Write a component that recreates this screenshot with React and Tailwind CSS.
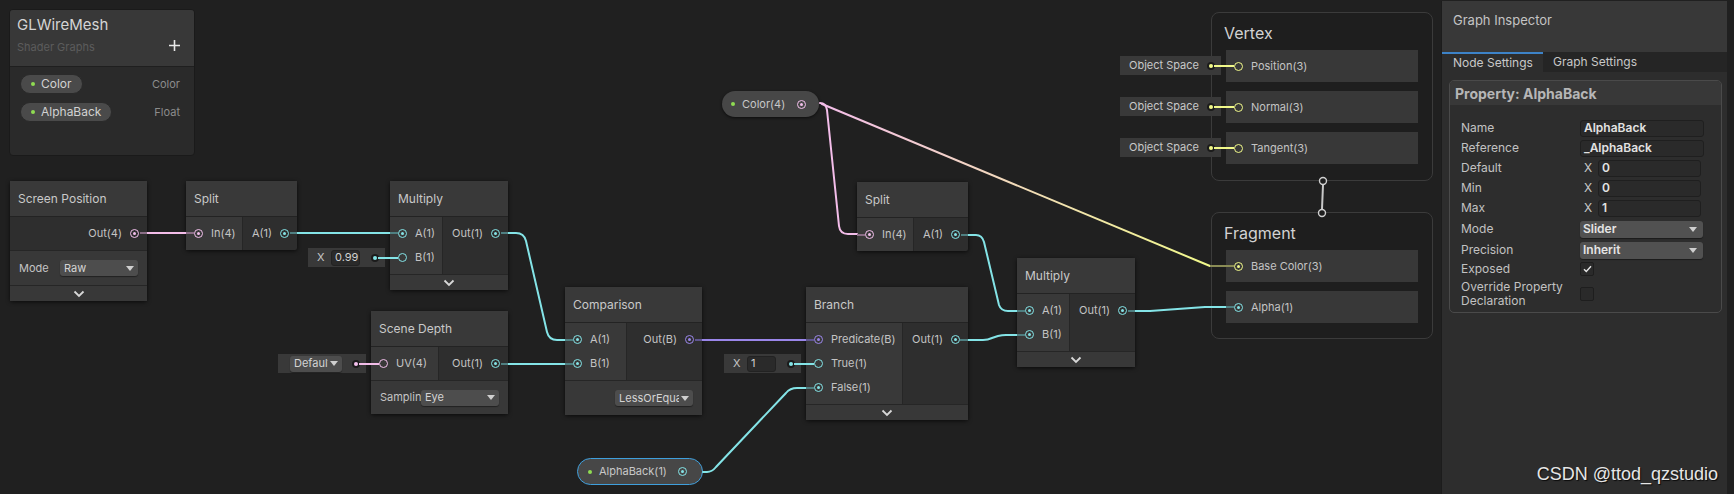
import React from 'react';

// port colours per slot type
const C = {
  f: { b: 'border-[#84e4e7]', d: 'bg-[#84e4e7]' },
  v4: { b: 'border-[#f3c0ec]', d: 'bg-[#f3c0ec]' },
  b: { b: 'border-[#9a86ea]', d: 'bg-[#9a86ea]' },
  v3: { b: 'border-[#f1f98a]', d: 'bg-[#f1f98a]' },
};

function Port({ t, on }) {
  return (
    <span className={`flex h-[9px] w-[9px] shrink-0 items-center justify-center rounded-full border-[1.5px] ${C[t].b}`}>
      {on && <span className={`h-[3px] w-[3px] rounded-full ${C[t].d}`} />}
    </span>
  );
}

function In({ t, on, label }) {
  return (
    <div className="flex h-[24px] items-center gap-[8px] pl-[8px] whitespace-nowrap">
      <Port t={t} on={on} />
      <span>{label}</span>
    </div>
  );
}

function Out({ t, label }) {
  return (
    <div className="flex h-[24px] items-center justify-end gap-[8px] pr-[8px] whitespace-nowrap">
      <span>{label}</span>
      <Port t={t} on />
    </div>
  );
}

function Chevron() {
  return (
    <svg width="12" height="8" viewBox="0 0 12 8">
      <path d="M1.5 1.5 6 6l4.5-4.5" fill="none" stroke="#d8d8d8" strokeWidth="1.8" />
    </svg>
  );
}

function Tri() {
  return (
    <svg width="8" height="5" viewBox="0 0 8 5" className="shrink-0">
      <path d="M0 0h8L4 5z" fill="#cfcfcf" />
    </svg>
  );
}

function Drop({ label, w }) {
  return (
    <div className={`flex h-[16px] items-center gap-[2px] rounded-[3px] bg-[#4d4d4d] pl-[4px] pr-[4px] text-[11px] text-[#d4d4d4] shadow-[0_1px_1px_rgba(0,0,0,0.4)] ${w}`}>
      <span className="flex-1 overflow-hidden whitespace-nowrap">{label}</span>
      <Tri />
    </div>
  );
}

function Node({ pos, title, inW, ins = [], outs = [], children, chevron }) {
  return (
    <div className={`absolute flex flex-col rounded-[2px] bg-[#2e2e2e] text-[11px] text-[#c4c4c4] shadow-[0_1px_4px_rgba(0,0,0,0.7)] ${pos}`}>
      <div className="flex h-[36px] items-center border-b border-[#232323] bg-[#393939] pl-[8px] text-[12px] text-[#c9c9c9]">
        {title}
      </div>
      <div className="flex">
        {ins.length > 0 && (
          <div className={`flex flex-col border-r border-[#262626] bg-[#393939] pt-[4px] pb-[5px] ${inW}`}>
            {ins.map((p) => (
              <In key={p.label} {...p} />
            ))}
          </div>
        )}
        <div className="flex flex-1 flex-col pt-[4px] pb-[5px]">
          {outs.map((p) => (
            <Out key={p.label} {...p} />
          ))}
        </div>
      </div>
      {children}
      {chevron && (
        <div className="flex h-[16px] items-center justify-center border-t border-[#262626] bg-[#383838]">
          <Chevron />
        </div>
      )}
    </div>
  );
}

// little dot where an inline default value plugs into a port
function Dot({ t }) {
  return (
    <span className="flex h-[8px] w-[8px] shrink-0 items-center justify-center rounded-full bg-[#1b1b1b]">
      <span className={`h-[4px] w-[4px] rounded-full ${C[t].d}`} />
    </span>
  );
}

function XField({ pos, value }) {
  return (
    <div className={`absolute flex h-[19px] items-center bg-[#393939] pl-[9px] pr-[6px] text-[11px] text-[#c8c8c8] ${pos}`}>
      <span className="w-[7px]">X</span>
      <span className="ml-[7px] flex h-[16px] w-[29px] items-center rounded-[3px] border border-[#222] bg-[#2a2a2a] pl-[3px] text-[#d0d0d0]">
        {value}
      </span>
      <span className="ml-auto">
        <Dot t="f" />
      </span>
    </div>
  );
}

function SpaceField({ pos }) {
  return (
    <div className={`absolute flex h-[19px] w-[101px] items-center bg-[#393939] pl-[9px] pr-[6px] text-[11px] text-[#c8c8c8] ${pos}`}>
      <span>Object Space</span>
      <span className="ml-auto">
        <Dot t="v3" />
      </span>
    </div>
  );
}

function Slot({ label, on }) {
  return (
    <div className="flex h-[32px] items-center gap-[8px] bg-[#383838] pl-[8px] text-[11px] text-[#c4c4c4]">
      <Port t={label === 'Alpha(1)' ? 'f' : 'v3'} on={on} />
      <span>{label}</span>
    </div>
  );
}

function Context({ pos, title, children }) {
  return (
    <div className={`absolute flex flex-col rounded-[8px] border border-[#3b3b3b] bg-[#1e1e1e] ${pos}`}>
      <div className="flex h-[37px] items-center pl-[12px] pt-[2px] text-[16px] text-[#d2d2d2]">{title}</div>
      <div className="flex flex-col gap-[9px] px-[14px]">{children}</div>
    </div>
  );
}

function Pill({ label, type }) {
  return (
    <div className="flex h-[22px] items-center">
      <div className="flex h-[20px] items-center gap-[6px] rounded-full border border-[#2a2a2a] bg-[#4a4a4a] pl-[10px] pr-[10px] text-[12px] text-[#d2d2d2]">
        <span className="h-[4px] w-[4px] rounded-full bg-[#8fdc52]" />
        <span>{label}</span>
      </div>
      <span className="ml-auto text-[11px] text-[#8c8c8c]">{type}</span>
    </div>
  );
}

function Row({ label, h, children }) {
  return (
    <div className={`flex items-center ${h}`}>
      <span className="w-[119px] text-[12px] leading-[14px] text-[#c2c2c2]">{label}</span>
      {children}
    </div>
  );
}

function TextBox({ value }) {
  return (
    <div className="flex h-[17px] w-[124px] items-center rounded-[3px] border border-[#1f1f1f] bg-[#2a2a2a] pl-[3px] text-[12px] font-semibold text-[#e2e2e2]">
      {value}
    </div>
  );
}

function NumBox({ value }) {
  return (
    <div className="flex items-center">
      <span className="w-[18px] pl-[4px] text-[12px] text-[#c8c8c8]">X</span>
      <div className="flex h-[17px] w-[103px] items-center rounded-[3px] border border-[#1f1f1f] bg-[#2a2a2a] pl-[3px] text-[12px] font-semibold text-[#e2e2e2]">
        {value}
      </div>
    </div>
  );
}

function Select({ value }) {
  return (
    <div className="flex h-[17px] w-[123px] items-center rounded-[3px] bg-[#515151] pl-[3px] pr-[6px] text-[12px] font-semibold text-[#e4e4e4] shadow-[0_1px_1px_rgba(0,0,0,0.4)]">
      <span className="flex-1">{value}</span>
      <Tri />
    </div>
  );
}

function Check({ on }) {
  return (
    <div className="flex h-[14px] w-[14px] items-center justify-center rounded-[2px] border border-[#1e1e1e] bg-[#2a2a2a]">
      {on && (
        <svg width="9" height="8" viewBox="0 0 9 8">
          <path d="M1 4.2 3.3 6.5 8 1.2" fill="none" stroke="#e6e6e6" strokeWidth="1.4" />
        </svg>
      )}
    </div>
  );
}

function Wires() {
  const cyan = '#84e4e7';
  const pink = '#f3bde9';
  const stub = (x1, y1, x2, y2, c) => <line x1={x1} y1={y1} x2={x2} y2={y2} stroke={c} strokeWidth="2" />;
  return (
    <svg className="pointer-events-none absolute left-0 top-0" width="1734" height="494">
      <defs>
        <linearGradient id="py" gradientUnits="userSpaceOnUse" x1="820" y1="103" x2="1210" y2="266">
          <stop offset="0" stopColor="#f3bde9" />
          <stop offset="1" stopColor="#f1f98a" />
        </linearGradient>
      </defs>
      <g fill="none" strokeWidth="2" strokeLinecap="round">
        <path d="M147 233 L186 233" stroke={pink} />
        <path d="M297 233 L390 233" stroke={cyan} />
        <path d="M508 233 L516 233 Q524 233 526 241 L547 332 Q549 340 557 340 L565 340" stroke={cyan} />
        <path d="M508 364 L565 364" stroke={cyan} />
        <path d="M702 340 L806 340" stroke="#9a86ea" />
        <path d="M703 472 L707 472 Q712 472 716 467 L786 393 Q790 388 797 388 L806 388" stroke={cyan} />
        <path d="M820 103 Q826 103 827 110 L839 226 Q840 234 848 234 L857 234" stroke={pink} />
        <path d="M822 104 L1210 266" stroke="url(#py)" />
        <path d="M968 235 L976 235 Q982 235 984 242 L999 305 Q1001 311 1008 311 L1017 311" stroke={cyan} />
        <path d="M968 340 L983 340 Q988 340 992 338 L998 336 Q1002 335 1006 335 L1017 335" stroke={cyan} />
        <path d="M1135 311 L1150 311 L1205 307 L1226 307" stroke={cyan} />
        <path d="M1323 185 L1322 209" stroke="#c8c8c8" />
      </g>
      {/* darker stubs inside the nodes */}
      {stub(140, 233, 147, 233, '#8a6d86')}
      {stub(186, 233, 194, 233, '#8a6d86')}
      {stub(290, 233, 297, 233, '#4f7f81')}
      {stub(390, 233, 398, 233, '#4f7f81')}
      {stub(378, 258, 398, 258, cyan)}
      {stub(501, 233, 508, 233, '#4f7f81')}
      {stub(501, 364, 508, 364, '#4f7f81')}
      {stub(565, 340, 573, 340, '#4f7f81')}
      {stub(565, 364, 573, 364, '#4f7f81')}
      {stub(359, 364, 379, 364, pink)}
      {stub(695, 340, 702, 340, '#5f5590')}
      {stub(806, 340, 814, 340, '#5f5590')}
      {stub(794, 364, 814, 364, cyan)}
      {stub(806, 388, 814, 388, '#4f7f81')}
      {stub(857, 235, 865, 235, '#8a6d86')}
      {stub(961, 235, 968, 235, '#4f7f81')}
      {stub(960, 340, 968, 340, '#4f7f81')}
      {stub(1017, 311, 1025, 311, '#4f7f81')}
      {stub(1017, 335, 1025, 335, '#4f7f81')}
      {stub(1128, 311, 1135, 311, '#4f7f81')}
      {stub(1210, 266, 1234, 266, '#8a8c55')}
      {stub(1226, 307, 1234, 307, '#4f7f81')}
      {stub(1214, 66, 1234, 66, '#f1f98a')}
      {stub(1214, 107, 1234, 107, '#f1f98a')}
      {stub(1214, 148, 1234, 148, '#f1f98a')}
      <circle cx="1323" cy="181" r="3.5" fill="#1e1e1e" stroke="#d0d0d0" strokeWidth="1.4" />
      <circle cx="1322" cy="213" r="3.5" fill="#1e1e1e" stroke="#d0d0d0" strokeWidth="1.4" />
    </svg>
  );
}

export default function App() {
  return (
    <div className="relative h-[494px] w-[1734px] overflow-hidden bg-[#202020] font-['Inter','Noto_Sans',sans-serif]">
      {/* Blackboard */}
      <div className="absolute left-[9px] top-[9px] flex h-[147px] w-[186px] flex-col overflow-hidden rounded-[4px] border border-[#1a1a1a] bg-[#2a2a2a]">
        <div className="flex h-[57px] flex-col border-b border-[#1f1f1f] bg-[#383838] pl-[7px] pr-[14px] pt-[4px]">
          <span className="text-[15px] text-[#d4d4d4]">GLWireMesh</span>
          <div className="mt-[2px] flex items-center justify-between">
            <span className="text-[11px] text-[#5c5c5c]">Shader Graphs</span>
            <svg width="11" height="11" viewBox="0 0 11 11" className="-mt-[3px]">
              <path d="M5.5 0v11M0 5.5h11" stroke="#e8e8e8" strokeWidth="1.6" />
            </svg>
          </div>
        </div>
        <div className="flex flex-col gap-[6px] pl-[10px] pr-[14px] pt-[6px]">
          <Pill label="Color" type="Color" />
          <Pill label="AlphaBack" type="Float" />
        </div>
      </div>

      {/* Graph nodes */}
      <Node pos="left-[10px] top-[181px] w-[137px]" title="Screen Position" outs={[{ t: 'v4', label: 'Out(4)' }]} chevron>
        <div className="flex h-[35px] items-center border-t border-[#262626] bg-[#383838] pl-[9px] pr-[9px]">
          <span className="w-[41px]">Mode</span>
          <Drop label="Raw" w="w-[78px]" />
        </div>
      </Node>

      <Node
        pos="left-[186px] top-[181px] w-[111px]"
        title="Split"
        inW="w-[57px]"
        ins={[{ t: 'v4', on: true, label: 'In(4)' }]}
        outs={[{ t: 'f', label: 'A(1)' }]}
      />

      <Node
        pos="left-[390px] top-[181px] w-[118px]"
        title="Multiply"
        inW="w-[53px]"
        ins={[
          { t: 'f', on: true, label: 'A(1)' },
          { t: 'f', on: false, label: 'B(1)' },
        ]}
        outs={[{ t: 'f', label: 'Out(1)' }]}
        chevron
      />
      <XField pos="left-[308px] top-[248px] w-[77px]" value="0.99" />

      <Node
        pos="left-[371px] top-[311px] w-[137px]"
        title="Scene Depth"
        inW="w-[68px]"
        ins={[{ t: 'v4', on: false, label: 'UV(4)' }]}
        outs={[{ t: 'f', label: 'Out(1)' }]}
      >
        <div className="flex h-[34px] items-center border-t border-[#262626] bg-[#383838] pl-[9px] pr-[9px]">
          <span className="w-[41px] overflow-hidden whitespace-nowrap">Sampling</span>
          <Drop label="Eye" w="w-[78px]" />
        </div>
      </Node>
      <div className="absolute left-[278px] top-[354px] flex h-[19px] w-[88px] items-center bg-[#393939] pl-[12px] pr-[6px]">
        <Drop label="Default" w="w-[52px]" />
        <span className="ml-auto">
          <Dot t="v4" />
        </span>
      </div>

      <Node
        pos="left-[565px] top-[287px] w-[137px]"
        title="Comparison"
        inW="w-[62px]"
        ins={[
          { t: 'f', on: true, label: 'A(1)' },
          { t: 'f', on: true, label: 'B(1)' },
        ]}
        outs={[{ t: 'b', label: 'Out(B)' }]}
      >
        <div className="flex h-[35px] items-center justify-end border-t border-[#262626] bg-[#383838] pr-[9px]">
          <Drop label="LessOrEqual" w="w-[78px]" />
        </div>
      </Node>

      <Node
        pos="left-[806px] top-[287px] w-[162px]"
        title="Branch"
        inW="w-[97px]"
        ins={[
          { t: 'b', on: true, label: 'Predicate(B)' },
          { t: 'f', on: false, label: 'True(1)' },
          { t: 'f', on: true, label: 'False(1)' },
        ]}
        outs={[{ t: 'f', label: 'Out(1)' }]}
        chevron
      />
      <XField pos="left-[724px] top-[354px] w-[77px]" value="1" />

      <Node
        pos="left-[857px] top-[182px] w-[111px]"
        title="Split"
        inW="w-[57px]"
        ins={[{ t: 'v4', on: true, label: 'In(4)' }]}
        outs={[{ t: 'f', label: 'A(1)' }]}
      />

      <Node
        pos="left-[1017px] top-[258px] w-[118px]"
        title="Multiply"
        inW="w-[53px]"
        ins={[
          { t: 'f', on: true, label: 'A(1)' },
          { t: 'f', on: true, label: 'B(1)' },
        ]}
        outs={[{ t: 'f', label: 'Out(1)' }]}
        chevron
      />

      {/* Property nodes */}
      <div className="absolute left-[722px] top-[91px] flex h-[26px] w-[97px] items-center rounded-full bg-[#474747] pl-[9px] text-[11px] text-[#c8c8c8] shadow-[0_1px_3px_rgba(0,0,0,0.6)]">
        <span className="h-[4px] w-[4px] rounded-full bg-[#8fdc52]" />
        <span className="ml-[7px]">Color(4)</span>
        <span className="ml-[12px]">
          <Port t="v4" on />
        </span>
      </div>
      <div className="absolute left-[577px] top-[458px] flex h-[27px] w-[126px] items-center rounded-full border-[1.5px] border-[#3f9fdc] bg-[#474747] pl-[10px] text-[11px] text-[#c8c8c8]">
        <span className="h-[4px] w-[4px] rounded-full bg-[#8fdc52]" />
        <span className="ml-[7px]">AlphaBack(1)</span>
        <span className="ml-[11px]">
          <Port t="f" on />
        </span>
      </div>

      {/* Master stack */}
      <Context pos="left-[1211px] top-[12px] h-[169px] w-[222px]" title="Vertex">
        <Slot label="Position(3)" />
        <Slot label="Normal(3)" />
        <Slot label="Tangent(3)" />
      </Context>
      <SpaceField pos="left-[1120px] top-[56px]" />
      <SpaceField pos="left-[1120px] top-[97px]" />
      <SpaceField pos="left-[1120px] top-[138px]" />

      <Context pos="left-[1211px] top-[212px] h-[127px] w-[222px]" title="Fragment">
        <Slot label="Base Color(3)" on />
        <Slot label="Alpha(1)" on />
      </Context>

      <Wires />

      {/* Graph Inspector */}
      <div className="absolute left-[1441px] top-[1px] flex h-[493px] w-[286px] flex-col border-l border-[#1c1c1c] bg-[#2d2d2d]">
        <div className="flex h-[51px] items-start bg-[#383838] pl-[11px] pt-[10px] text-[13px] text-[#c4c4c4]">Graph Inspector</div>
        <div className="flex h-[20px] bg-[#252525] text-[12px] text-[#c8c8c8]">
          <div className="flex w-[101px] items-center border-t-2 border-[#3d83c8] bg-[#2d2d2d] pl-[11px]">Node Settings</div>
          <div className="flex items-center pl-[10px]">Graph Settings</div>
        </div>
        <div className="ml-[7px] mt-[8px] flex h-[233px] w-[273px] flex-col rounded-[5px] border border-[#4a4a4a]">
          <div className="flex h-[24px] items-center rounded-t-[4px] bg-[#383838] pl-[5px] text-[14px] font-bold text-[#b6b6b6]">
            Property: AlphaBack
          </div>
          <div className="flex flex-col pl-[11px] pt-[13px]">
            <Row label="Name" h="h-[20px]">
              <TextBox value="AlphaBack" />
            </Row>
            <Row label="Reference" h="h-[20px]">
              <TextBox value="_AlphaBack" />
            </Row>
            <Row label="Default" h="h-[20px]">
              <NumBox value="0" />
            </Row>
            <Row label="Min" h="h-[20px]">
              <NumBox value="0" />
            </Row>
            <Row label="Max" h="h-[20px]">
              <NumBox value="1" />
            </Row>
            <Row label="Mode" h="h-[22px]">
              <Select value="Slider" />
            </Row>
            <Row label="Precision" h="h-[20px]">
              <Select value="Inherit" />
            </Row>
            <Row label="Exposed" h="h-[17px]">
              <Check on />
            </Row>
            <Row label={<>Override Property<br />Declaration</>} h="h-[34px]">
              <Check />
            </Row>
          </div>
        </div>
      </div>

      <div className="absolute right-[16px] top-[462px] font-['Liberation_Sans',Arial,sans-serif] text-[18px] leading-[24px] text-[#e6e6e6] [text-shadow:1px_1px_1px_rgba(0,0,0,0.8)]">
        CSDN @ttod_qzstudio
      </div>
    </div>
  );
}
